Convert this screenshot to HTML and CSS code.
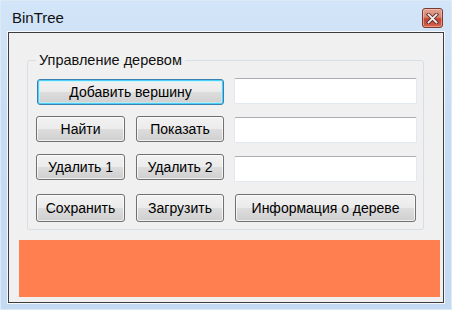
FILE: index.html
```html
<!DOCTYPE html>
<html lang="ru">
<head>
  <meta charset="UTF-8" />
  <meta name="viewport" content="width=device-width, initial-scale=1.0"/>
  <title>BinTree</title>
  <link rel="stylesheet" href="styles.css">
</head>
<body>
  <div class="window">
    <div class="titlebar">
      <span class="title">BinTree</span>
      <button class="close-btn" title="Закрыть">
        <svg width="13" height="11" viewBox="0 0 13 11">
          <path d="M2.5 1.5 L10.5 9.5 M10.5 1.5 L2.5 9.5" stroke="#5a2a24" stroke-width="3.6" stroke-linecap="square"/>
          <path d="M2.5 1.5 L10.5 9.5 M10.5 1.5 L2.5 9.5" stroke="#eeeeee" stroke-width="1.8" stroke-linecap="square"/>
        </svg>
      </button>
    </div>

    <div class="client">
      <fieldset class="group">
        <legend>Управление деревом</legend>

        <div class="row row1">
          <button class="btn btn-default wide">Добавить вершину</button>
          <input type="text" class="field" />
        </div>

        <div class="row row2">
          <button class="btn col1">Найти</button>
          <button class="btn col2">Показать</button>
          <input type="text" class="field" />
        </div>

        <div class="row row3">
          <button class="btn col1">Удалить 1</button>
          <button class="btn col2">Удалить 2</button>
          <input type="text" class="field" />
        </div>

        <div class="row row4">
          <button class="btn col1 tall">Сохранить</button>
          <button class="btn col2 tall">Загрузить</button>
          <button class="btn info tall">Информация о дереве</button>
        </div>
      </fieldset>

      <div class="canvas-area"></div>
    </div>
  </div>
</body>
</html>
```

FILE: styles.css
```css
html, body {
  margin: 0;
  padding: 0;
}
body {
  font-family: 'Liberation Sans', Arial, sans-serif;
  background: #c9def5;
}
.window {
  box-sizing: border-box;
  width: 452px;
  height: 310px;
  border: 1px solid #dce9f7;
  background: linear-gradient(to bottom, #d3e5f8, #c6dcf3 40%, #c4daf2);
  display: flex;
  flex-direction: column;
}
.titlebar {
  height: 31px;
  flex: none;
  display: flex;
  align-items: flex-start;
  justify-content: space-between;
  padding: 0 8px 0 11px;
}
.title {
  font-size: 15px;
  color: #111;
  margin-top: 8px;
}
.close-btn {
  margin-top: 7px;
  width: 21px;
  height: 20px;
  padding: 0;
  border: 1px solid #7b3b33;
  border-radius: 3px;
  background: linear-gradient(to bottom, #e3a393, #d88470 45%, #c3432f 55%, #d6624c);
  box-shadow: inset 0 0 0 1px rgba(255, 210, 200, 0.5);
  display: flex;
  align-items: center;
  justify-content: center;
}
.client {
  flex: 1;
  margin: 0 7px 6px 7px;
  border: 1px solid #3d3d3d;
  box-shadow: 0 0 0 1px rgba(255, 255, 255, 0.8);
  background: #f0f0f0;
  display: flex;
  flex-direction: column;
}
.group {
  box-sizing: border-box;
  width: 397px;
  margin: 19px 0 0 18px;
  padding: 11px 0 7px 8px;
  border: 1px solid #d5dfe5;
  border-radius: 3px;
  min-width: 0;
}
.group legend {
  margin-left: 0;
  padding: 0 3px;
  font-size: 14.5px;
  line-height: 16px;
  color: #111;
}
.row {
  display: flex;
  align-items: flex-start;
}
.row2 { margin-top: 11px; }
.row3 { margin-top: 11px; }
.row4 { margin-top: 12px; }
.btn {
  box-sizing: border-box;
  height: 26px;
  padding: 0;
  border: 1px solid #707070;
  border-radius: 3px;
  background: linear-gradient(to bottom, #f2f2f2, #ebebeb 50%, #dddddd 51%, #cfcfcf);
  box-shadow: inset 0 0 0 1px rgba(255, 255, 255, 0.7);
  font-family: 'Liberation Sans', Arial, sans-serif;
  font-size: 14px;
  color: #000;
}
.btn.tall { height: 28px; }
.btn-default {
  border-color: #3c7fb1;
  box-shadow: inset 0 0 0 1px #48d2f8, inset 0 0 0 2px rgba(190, 240, 255, 0.6);
}
.wide { width: 187px; margin-left: 1px; }
.col1 { width: 89px; }
.col2 { width: 88px; margin-left: 11px; }
.info { width: 181px; margin-left: 11px; }
.field {
  box-sizing: border-box;
  width: 183px;
  height: 26px;
  margin-left: 10px;
  border: 1px solid #e2e8ef;
  border-top-color: #abadb3;
  border-radius: 2px;
  background: #fff;
  outline: none;
}
.row1 .field { margin-top: -1px; }
.row2 .field { margin-top: 1px; }
.row3 .field { margin-top: 2px; }
.canvas-area {
  height: 57px;
  margin: 10px 3px 0 10px;
  background: #ff7f50;
}
```
